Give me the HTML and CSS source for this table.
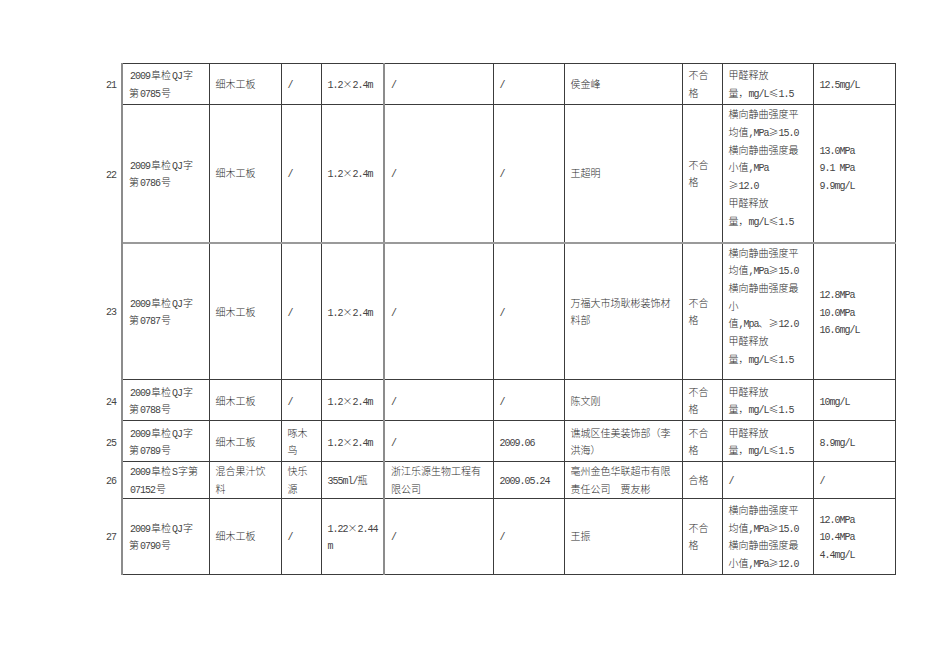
FILE: index.html
```html
<!DOCTYPE html>
<html lang="zh">
<head>
<meta charset="utf-8">
<title>检验结果</title>
<link rel="stylesheet" href="styles.css">
</head>
<body>
<table class="grid">
  <colgroup>
    <col class="c-no"><col class="c1"><col class="c2"><col class="c3"><col class="c4"><col class="c5"><col class="c6"><col class="c7"><col class="c8"><col class="c9"><col class="c10">
  </colgroup>
  <tbody>
    <tr class="r-a">
      <td class="no"><span class="l">21</span></td>
      <td class="first"><span class="l">2009</span>阜检<span class="l">QJ</span>字<br>第<span class="l">0785</span>号</td>
      <td>细木工板</td>
      <td><span class="l">/</span></td>
      <td><span class="l">1.2</span><span class="fw">×</span><span class="l">2.4m</span></td>
      <td class="gl"><span class="l">/</span></td>
      <td><span class="l">/</span></td>
      <td>侯金峰</td>
      <td>不合<br>格</td>
      <td>甲醛释放<br>量，<span class="l">mg/L</span><span class="fw">≤</span><span class="l">1.5</span></td>
      <td><span class="l">12.5mg/L</span></td>
    </tr>
    <tr class="r-b">
      <td class="no"><span class="l">22</span></td>
      <td class="first"><span class="l">2009</span>阜检<span class="l">QJ</span>字<br>第<span class="l">0786</span>号</td>
      <td>细木工板</td>
      <td><span class="l">/</span></td>
      <td><span class="l">1.2</span><span class="fw">×</span><span class="l">2.4m</span></td>
      <td class="gl"><span class="l">/</span></td>
      <td><span class="l">/</span></td>
      <td>王超明</td>
      <td>不合<br>格</td>
      <td class="lift">横向静曲强度平<br>均值<span class="l">,MPa</span><span class="fw">≥</span><span class="l">15.0</span><br>横向静曲强度最<br>小值<span class="l">,MPa</span><br><span class="fw">≥</span><span class="l">12.0</span><br>甲醛释放<br>量，<span class="l">mg/L</span><span class="fw">≤</span><span class="l">1.5</span></td>
      <td class="lift"><span class="l">13.0MPa</span><br><span class="l">9.1 MPa</span><br><span class="l">9.9mg/L</span></td>
    </tr>
    <tr class="r-c">
      <td class="no"><span class="l">23</span></td>
      <td class="first"><span class="l">2009</span>阜检<span class="l">QJ</span>字<br>第<span class="l">0787</span>号</td>
      <td>细木工板</td>
      <td><span class="l">/</span></td>
      <td><span class="l">1.2</span><span class="fw">×</span><span class="l">2.4m</span></td>
      <td class="gl"><span class="l">/</span></td>
      <td><span class="l">/</span></td>
      <td>万福大市场耿彬装饰材<br>料部</td>
      <td>不合<br>格</td>
      <td class="lift">横向静曲强度平<br>均值<span class="l">,MPa</span><span class="fw">≥</span><span class="l">15.0</span><br>横向静曲强度最<br>小<br>值<span class="l">,Mpa</span>、<span class="fw">≥</span><span class="l">12.0</span><br>甲醛释放<br>量，<span class="l">mg/L</span><span class="fw">≤</span><span class="l">1.5</span></td>
      <td><span class="l">12.8MPa</span><br><span class="l">10.0MPa</span><br><span class="l">16.6mg/L</span></td>
    </tr>
    <tr class="r-a">
      <td class="no"><span class="l">24</span></td>
      <td class="first"><span class="l">2009</span>阜检<span class="l">QJ</span>字<br>第<span class="l">0788</span>号</td>
      <td>细木工板</td>
      <td><span class="l">/</span></td>
      <td><span class="l">1.2</span><span class="fw">×</span><span class="l">2.4m</span></td>
      <td class="gl"><span class="l">/</span></td>
      <td><span class="l">/</span></td>
      <td>陈文刚</td>
      <td>不合<br>格</td>
      <td>甲醛释放<br>量，<span class="l">mg/L</span><span class="fw">≤</span><span class="l">1.5</span></td>
      <td><span class="l">10mg/L</span></td>
    </tr>
    <tr class="r-a">
      <td class="no"><span class="l">25</span></td>
      <td class="first"><span class="l">2009</span>阜检<span class="l">QJ</span>字<br>第<span class="l">0789</span>号</td>
      <td>细木工板</td>
      <td>啄木<br>鸟</td>
      <td><span class="l">1.2</span><span class="fw">×</span><span class="l">2.4m</span></td>
      <td class="gl"><span class="l">/</span></td>
      <td><span class="l">2009.06</span></td>
      <td>谯城区佳美装饰部（李<br>洪海）</td>
      <td>不合<br>格</td>
      <td>甲醛释放<br>量，<span class="l">mg/L</span><span class="fw">≤</span><span class="l">1.5</span></td>
      <td><span class="l">8.9mg/L</span></td>
    </tr>
    <tr class="r-d">
      <td class="no"><span class="l">26</span></td>
      <td class="first"><span class="l">2009</span>阜检<span class="l">S</span>字第<br><span class="l">07152</span>号</td>
      <td>混合果汁饮<br>料</td>
      <td>快乐<br>源</td>
      <td><span class="l">355ml/</span>瓶</td>
      <td class="gl">浙江乐源生物工程有<br>限公司</td>
      <td><span class="l">2009.05.24</span></td>
      <td>亳州金色华联超市有限<br>责任公司　贾友彬</td>
      <td>合格</td>
      <td><span class="l">/</span></td>
      <td><span class="l">/</span></td>
    </tr>
    <tr class="r-e">
      <td class="no"><span class="l">27</span></td>
      <td class="first"><span class="l">2009</span>阜检<span class="l">QJ</span>字<br>第<span class="l">0790</span>号</td>
      <td>细木工板</td>
      <td><span class="l">/</span></td>
      <td><span class="l">1.22</span><span class="fw">×</span><span class="l">2.44</span><br><span class="l">m</span></td>
      <td class="gl"><span class="l">/</span></td>
      <td><span class="l">/</span></td>
      <td>王振</td>
      <td>不合<br>格</td>
      <td>横向静曲强度平<br>均值<span class="l">,MPa</span><span class="fw">≥</span><span class="l">15.0</span><br>横向静曲强度最<br>小值<span class="l">,MPa</span><span class="fw">≥</span><span class="l">12.0</span></td>
      <td><span class="l">12.0MPa</span><br><span class="l">10.4MPa</span><br><span class="l">4.4mg/L</span></td>
    </tr>
  </tbody>
</table>
</body>
</html>
```
FILE: styles.css
```css
html, body {
  margin: 0;
  padding: 0;
  background: #ffffff;
}

body {
  font-family: "Noto Sans CJK SC", "Liberation Serif", sans-serif;
  font-size: 10px;
  font-weight: 300;
  color: #2e2e2e;
}

.grid {
  margin: 63px 0 0 97px;
  border-collapse: collapse;
  table-layout: fixed;
  width: 798px;
}

.c-no { width: 25px; }
.c1 { width: 87px; }
.c2 { width: 72px; }
.c3 { width: 40px; }
.c4 { width: 63px; }
.c5 { width: 109px; }
.c6 { width: 71px; }
.c7 { width: 118px; }
.c8 { width: 40px; }
.c9 { width: 91px; }
.c10 { width: 82px; }

.grid td {
  border: 1px solid #3c3c3c;
  padding: 0 4px 0 6px;
  vertical-align: middle;
  line-height: 17.7px;
  white-space: nowrap;
  overflow: visible;
  text-align: left;
}

.l {
  font-family: "Liberation Mono", monospace;
  font-weight: 400;
  font-size: 10px;
  line-height: 10px;
  letter-spacing: -1px;
  color: #444444;
}

.fw {
  font-family: "Noto Sans CJK SC", sans-serif;
  display: inline-block;
  width: 10px;
  line-height: 10px;
  text-align: center;
}

.first .l {
  margin: 0 1px;
}

.grid td.no {
  border: none;
  border-right: 2px solid #8c8c8c;
  padding: 0 5px 0 0;
  text-align: right;
}

.grid td.first {
  border-left: 2px solid #8c8c8c;
}

.grid td.gl {
  border-left: 2px solid #8c8c8c;
}

.grid td.lift {
  padding-bottom: 12px;
}

.r-a { height: 41px; }
.r-b { height: 138px; }
.r-c { height: 137px; }
.r-d { height: 36px; }
.r-e { height: 76px; }

.r-b td:not(.no) {
  border-bottom: 2px solid #9a9a9a;
}
```
